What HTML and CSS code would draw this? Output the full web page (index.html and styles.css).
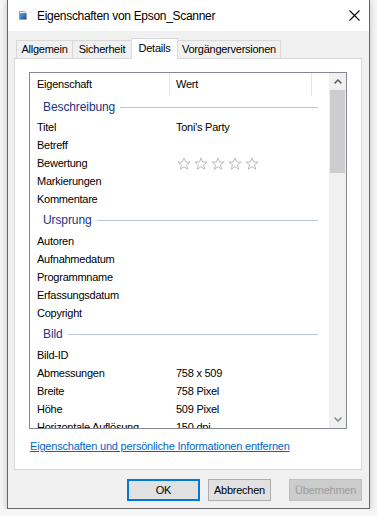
FILE: index.html
```html
<!DOCTYPE html>
<html lang="de">
<head>
<meta charset="utf-8">
<title>Eigenschaften von Epson_Scanner</title>
<link rel="stylesheet" href="styles.css">
</head>
<body>
<svg class="defs" width="0" height="0">
  <defs>
    <symbol id="star" viewBox="0 0 14 14">
      <path d="M7 0.8 L8.6 5 L13.1 5.1 L9.5 7.9 L10.8 12.3 L7 9.7 L3.2 12.3 L4.5 7.9 L0.9 5.1 L5.4 5 Z" fill="#fff" stroke="#bcbcbc" stroke-width="1" stroke-linejoin="round"/>
    </symbol>
  </defs>
</svg>
<div class="window">
  <header class="titlebar">
    <svg class="title-icon" width="8" height="9" viewBox="0 0 8 9">
      <defs>
        <linearGradient id="pic" x1="0" y1="0" x2="1" y2="1">
          <stop offset="0" stop-color="#5aa8e8"/>
          <stop offset="1" stop-color="#1a4f9a"/>
        </linearGradient>
      </defs>
      <path d="M0.5 0.5 H5.5 L7.5 2.5 V8.5 H0.5 Z" fill="#fff" stroke="#a0a0a0"/>
      <rect x="1" y="2" width="6" height="6" fill="url(#pic)"/>
    </svg>
    <span class="title">Eigenschaften von Epson_Scanner</span>
    <svg class="close" width="11" height="11" viewBox="0 0 11 11">
      <path d="M0.5 0.5 L10.5 10.5 M10.5 0.5 L0.5 10.5" stroke="#000" stroke-width="1.1"/>
    </svg>
  </header>
  <div class="client">
    <nav class="tabs">
      <div class="tab tab-general">Allgemein</div>
      <div class="tab tab-security">Sicherheit</div>
      <div class="tab tab-details tab-selected">Details</div>
      <div class="tab tab-versions">Vorgängerversionen</div>
    </nav>
    <section class="panel">
      <div class="list">
        <div class="list-body">
          <div class="list-header">
            <div class="col-name">Eigenschaft</div>
            <div class="col-value">Wert</div>
          </div>
          <div class="group group-first"><span class="group-title">Beschreibung</span><span class="group-line"></span></div>
          <div class="row"><span class="name">Titel</span><span class="value">Toni's Party</span></div>
          <div class="row"><span class="name">Betreff</span><span class="value"></span></div>
          <div class="row"><span class="name">Bewertung</span>
            <span class="value stars">
              <svg class="star"><use href="#star"/></svg>
              <svg class="star"><use href="#star"/></svg>
              <svg class="star"><use href="#star"/></svg>
              <svg class="star"><use href="#star"/></svg>
              <svg class="star"><use href="#star"/></svg>
            </span>
          </div>
          <div class="row"><span class="name">Markierungen</span><span class="value"></span></div>
          <div class="row"><span class="name">Kommentare</span><span class="value"></span></div>
          <div class="group"><span class="group-title">Ursprung</span><span class="group-line"></span></div>
          <div class="row"><span class="name">Autoren</span><span class="value"></span></div>
          <div class="row"><span class="name">Aufnahmedatum</span><span class="value"></span></div>
          <div class="row"><span class="name">Programmname</span><span class="value"></span></div>
          <div class="row"><span class="name">Erfassungsdatum</span><span class="value"></span></div>
          <div class="row"><span class="name">Copyright</span><span class="value"></span></div>
          <div class="group"><span class="group-title">Bild</span><span class="group-line"></span></div>
          <div class="row"><span class="name">Bild-ID</span><span class="value"></span></div>
          <div class="row"><span class="name">Abmessungen</span><span class="value">758 x 509</span></div>
          <div class="row"><span class="name">Breite</span><span class="value">758 Pixel</span></div>
          <div class="row"><span class="name">Höhe</span><span class="value">509 Pixel</span></div>
          <div class="row"><span class="name">Horizontale Auflösung</span><span class="value">150 dpi</span></div>
        </div>
        <div class="scrollbar">
          <div class="sb-arrow">
            <svg width="8" height="5" viewBox="0 0 8 5"><polyline points="0.6,4.4 4,1 7.4,4.4" fill="none" stroke="#606060" stroke-width="1.5"/></svg>
          </div>
          <div class="sb-thumb"></div>
          <div class="sb-track"></div>
          <div class="sb-arrow">
            <svg width="8" height="5" viewBox="0 0 8 5"><polyline points="0.6,0.6 4,4 7.4,0.6" fill="none" stroke="#8c8c8c" stroke-width="1.5"/></svg>
          </div>
        </div>
      </div>
      <a class="link" href="#">Eigenschaften und persönliche Informationen entfernen</a>
    </section>
    <div class="buttons">
      <button class="btn btn-ok">OK</button>
      <button class="btn btn-cancel">Abbrechen</button>
      <button class="btn btn-apply" disabled>Übernehmen</button>
    </div>
  </div>
</div>
</body>
</html>
```
FILE: styles.css
```css
html, body {
  margin: 0;
  padding: 0;
}

body {
  background: #f6f6f6;
  font-family: "Liberation Sans", Arial, sans-serif;
  font-size: 11px;
  letter-spacing: -0.25px;
  color: #000;
}

.defs {
  position: absolute;
  width: 0;
  height: 0;
}

.window {
  margin-left: 7px;
  width: 363px;
  height: 509px;
  box-sizing: border-box;
  border: 1px solid #666;
  border-top: none;
  background: #f0f0f0;
  box-shadow: 0 1px 7px rgba(0, 0, 0, 0.22);
  display: flex;
  flex-direction: column;
}

.titlebar {
  height: 31px;
  flex: none;
  background: #fff;
  display: flex;
  align-items: center;
  padding: 0 9px 0 11px;
}

.title-icon {
  flex: none;
  margin-top: -1px;
}

.title {
  flex: 1;
  margin-left: 10px;
  font-size: 12px;
  letter-spacing: -0.3px;
}

.close {
  flex: none;
}

.client {
  flex: 1;
  display: flex;
  flex-direction: column;
}

.tabs {
  display: flex;
  align-items: flex-start;
  height: 20px;
  padding: 7px 0 0 8px;
  flex: none;
}

.tab {
  height: 18px;
  margin-top: 2px;
  margin-right: -1px;
  box-sizing: border-box;
  border: 1px solid #d9d9d9;
  border-bottom: none;
  background: #f0f0f0;
  text-align: center;
  line-height: 17px;
  white-space: nowrap;
}

.tab-selected {
  height: 21px;
  margin-top: 0;
  background: #fff;
  position: relative;
  z-index: 1;
  line-height: 18px;
}

.tab-general { width: 57px; }
.tab-security { width: 60px; }
.tab-details { width: 47px; }
.tab-versions { width: 104px; }

.panel {
  height: 412px;
  flex: none;
  box-sizing: border-box;
  margin: 0 7px 0 6px;
  border: 1px solid #d9d9d9;
  background: #fff;
  padding: 13px 14px 0 14px;
}

.list {
  height: 357px;
  box-sizing: border-box;
  border: 1px solid #828790;
  display: flex;
}

.list-body {
  flex: 1;
  overflow: hidden;
}

.list-header {
  display: flex;
  height: 23px;
}

.col-name,
.col-value {
  box-sizing: border-box;
  border-right: 1px solid #e5e5e5;
  line-height: 23px;
}

.col-name {
  width: 140px;
  padding-left: 7px;
}

.col-value {
  width: 142px;
  padding-left: 6px;
}

.group {
  display: flex;
  align-items: center;
  height: 24px;
  padding: 0 11px 0 13px;
}

.group-first {
  height: 22px;
}

.group-title {
  color: #1e3287;
  font-size: 12px;
  letter-spacing: -0.1px;
  line-height: 14px;
}

.group-line {
  flex: 1;
  height: 1px;
  margin-left: 5px;
  background: #bcc6d4;
}

.row {
  display: flex;
  align-items: center;
  height: 18px;
  white-space: nowrap;
}

.name {
  width: 146px;
  flex: none;
  box-sizing: border-box;
  padding-left: 7px;
}

.value {
  flex: 1;
}

.stars {
  display: flex;
  gap: 3px;
  padding-left: 1px;
  margin-top: 1px;
}

.star {
  width: 14px;
  height: 14px;
}

.scrollbar {
  width: 17px;
  flex: none;
  display: flex;
  flex-direction: column;
  background: #f0f0f0;
}

.sb-arrow {
  height: 17px;
  display: flex;
  align-items: center;
  justify-content: center;
}

.sb-thumb {
  height: 83px;
  margin: 0 1px;
  background: #cdcdcd;
}

.sb-track {
  flex: 1;
}

.link {
  display: block;
  margin-top: 8px;
  padding-left: 1px;
  line-height: 18px;
  color: #0066cc;
  text-decoration: underline;
  letter-spacing: -0.2px;
}

.buttons {
  display: flex;
  justify-content: flex-end;
  margin-top: 9px;
  padding-right: 7px;
}

.btn {
  height: 22px;
  box-sizing: border-box;
  padding: 0;
  border: 1px solid #adadad;
  background: #e1e1e1;
  font-family: "Liberation Sans", Arial, sans-serif;
  font-size: 11px;
  letter-spacing: -0.25px;
  color: #000;
}

.btn-ok {
  width: 73px;
  border: 2px solid #0078d7;
}

.btn-cancel {
  width: 63px;
  margin-left: 8px;
}

.btn-apply {
  width: 73px;
  margin-left: 18px;
  background: #cccccc;
  border-color: #bfbfbf;
  color: #9c9c9c;
}
```
